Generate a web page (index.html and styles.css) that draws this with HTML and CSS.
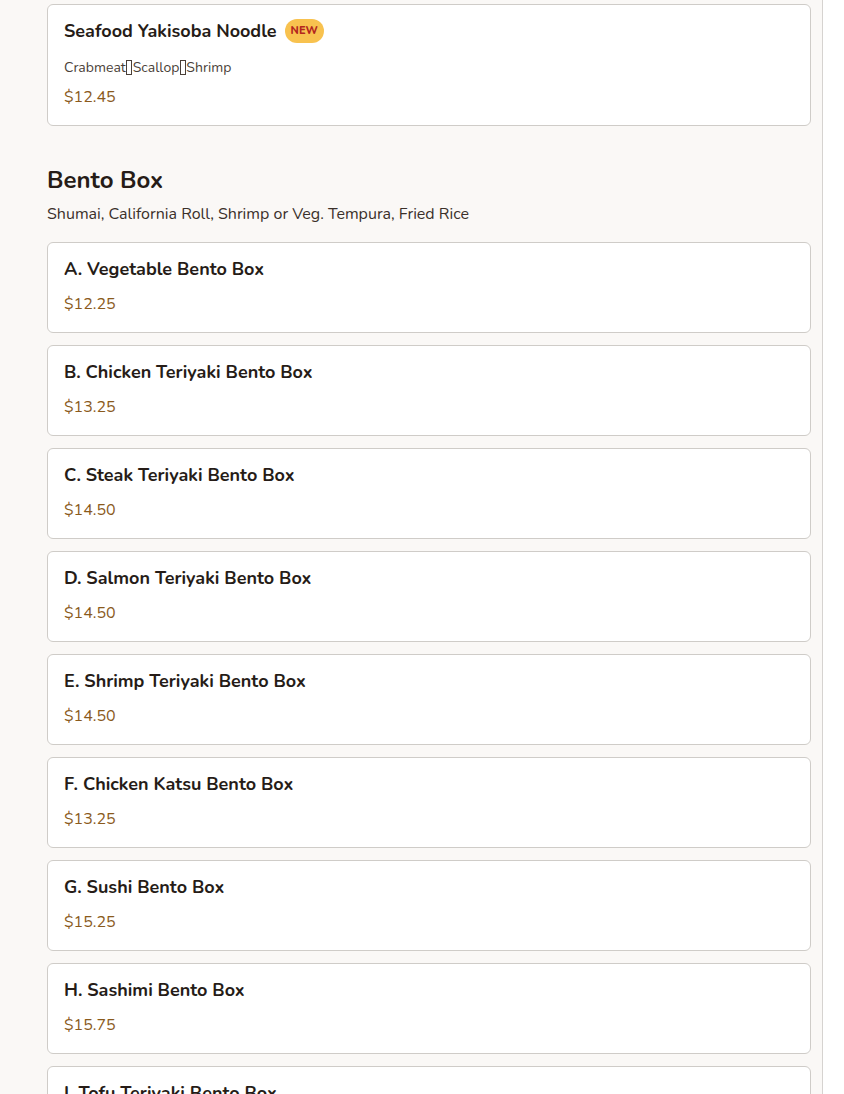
FILE: index.html
```html
<!DOCTYPE html>
<html lang="en">
<head>
<meta charset="utf-8">
<title>Menu</title>
<link rel="stylesheet" href="styles.css">
</head>
<body>
<div class="page">
  <div class="list">
    <div class="card">
      <div class="title-row">
        <h3 class="item-title">Seafood Yakisoba Noodle</h3>
        <span class="badge">NEW</span>
      </div>
      <p class="desc">Crabmeat<span class="tofu"></span>Scallop<span class="tofu"></span>Shrimp</p>
      <p class="price">$12.45</p>
    </div>
  </div>

  <section class="section">
    <h2 class="section-title">Bento Box</h2>
    <p class="section-sub">Shumai, California Roll, Shrimp or Veg. Tempura, Fried Rice</p>
    <div class="list">
      <div class="card"><h3 class="item-title">A. Vegetable Bento Box</h3><p class="price">$12.25</p></div>
      <div class="card"><h3 class="item-title">B. Chicken Teriyaki Bento Box</h3><p class="price">$13.25</p></div>
      <div class="card"><h3 class="item-title">C. Steak Teriyaki Bento Box</h3><p class="price">$14.50</p></div>
      <div class="card"><h3 class="item-title">D. Salmon Teriyaki Bento Box</h3><p class="price">$14.50</p></div>
      <div class="card"><h3 class="item-title">E. Shrimp Teriyaki Bento Box</h3><p class="price">$14.50</p></div>
      <div class="card"><h3 class="item-title">F. Chicken Katsu Bento Box</h3><p class="price">$13.25</p></div>
      <div class="card"><h3 class="item-title">G. Sushi Bento Box</h3><p class="price">$15.25</p></div>
      <div class="card"><h3 class="item-title">H. Sashimi Bento Box</h3><p class="price">$15.75</p></div>
      <div class="card"><h3 class="item-title">I. Tofu Teriyaki Bento Box</h3><p class="price">$13.25</p></div>
    </div>
  </section>
</div>
</body>
</html>
```

FILE: styles.css
```css
html, body {
  margin: 0;
  padding: 0;
  background: #ffffff;
}
body {
  font-family: "Nunito", "Lato", "Open Sans", sans-serif;
  color: #2b211c;
  overflow: hidden;
  height: 1094px;
}
.page {
  width: 764px;
  min-height: 1094px;
  background: #faf8f6;
  border-right: 1px solid #d6d3d0;
  padding: 4px 11px 0 47px;
  box-sizing: content-box;
}
.list {
  display: flex;
  flex-direction: column;
  gap: 12px;
}
.card {
  background: #ffffff;
  border: 1px solid #cfccc8;
  border-radius: 6px;
  padding: 14px 16px 16px;
  width: 764px;
  box-sizing: border-box;
}
.title-row {
  display: flex;
  align-items: center;
  gap: 8px;
}
.item-title {
  margin: 0;
  font-size: 18px;
  line-height: 24px;
  font-weight: 700;
  color: #261c17;
}
.badge {
  display: inline-block;
  background: #f8c24f;
  color: #b3261e;
  font-size: 11px;
  font-weight: 800;
  line-height: 14px;
  padding: 5px 6px 5px;
  border-radius: 12px;
}
.desc {
  margin: 15px 0 0;
  font-size: 14px;
  line-height: 20px;
  color: #4a3f38;
}
.tofu {
  display: inline-block;
  width: 4px;
  height: 13px;
  border: 1px solid #4a3f38;
  margin: 0 0.5px;
  vertical-align: -3px;
}
.price {
  margin: 11px 0 0;
  font-size: 16px;
  line-height: 24px;
  color: #8a5a1c;
}
.desc + .price {
  margin-top: 7px;
}
.section {
  margin-top: 38px;
}
.section-title {
  margin: 0;
  font-size: 24px;
  line-height: 32px;
  font-weight: 700;
  color: #261c17;
}
.section-sub {
  margin: 7px 0 17px;
  font-size: 16px;
  line-height: 22px;
  color: #3a302a;
}
```
